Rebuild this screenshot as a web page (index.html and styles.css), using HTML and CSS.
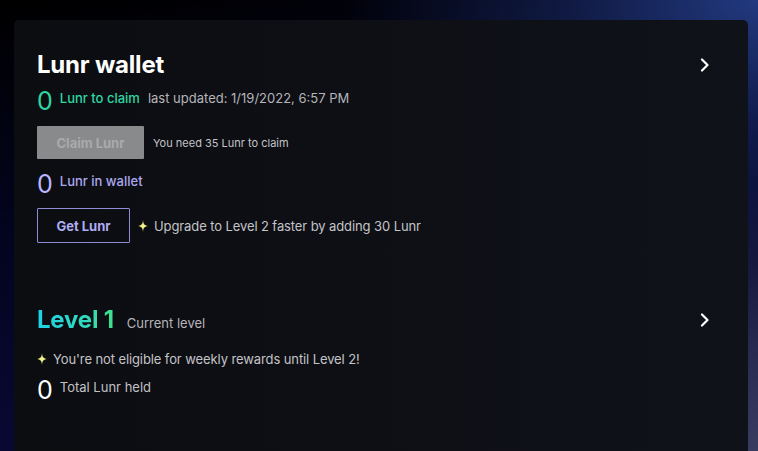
FILE: index.html
```html
<!DOCTYPE html>
<html>
<head>
<meta charset="utf-8">
<link rel="stylesheet" href="styles.css">
</head>
<body>
<div class="card">
  <section class="wallet">
    <div class="head">
      <h2 class="title">Lunr wallet</h2>
      <svg class="chev" width="10" height="14" viewBox="0 0 10 14"><path d="M2 1.5 L7.5 7 L2 12.5" fill="none" stroke="#fff" stroke-width="2.2" stroke-linecap="round" stroke-linejoin="round"/></svg>
    </div>
    <div class="stat green">
      <span class="num">0</span>
      <span class="label">Lunr to claim</span>
      <span class="meta">last updated: 1/19/2022, 6:57 PM</span>
    </div>
    <div class="action">
      <button class="btn btn-disabled">Claim Lunr</button>
      <span class="note">You need 35 Lunr to claim</span>
    </div>
    <div class="stat lav">
      <span class="num">0</span>
      <span class="label">Lunr in wallet</span>
    </div>
    <div class="action">
      <button class="btn btn-outline">Get Lunr</button>
      <svg class="spark" width="10" height="12" viewBox="0 0 10 12"><path d="M5 0 C5.4 4.2 6 5.2 10 6 C6 6.8 5.4 7.8 5 12 C4.6 7.8 4 6.8 0 6 C4 5.2 4.6 4.2 5 0 Z" fill="#f2f28a"/></svg>
      <span class="hint">Upgrade to Level 2 faster by adding 30 Lunr</span>
    </div>
  </section>
  <section class="level">
    <div class="head">
      <div class="level-title">
        <h2 class="title grad">Level 1</h2>
        <span class="meta">Current level</span>
      </div>
      <svg class="chev" width="10" height="14" viewBox="0 0 10 14"><path d="M2 1.5 L7.5 7 L2 12.5" fill="none" stroke="#fff" stroke-width="2.2" stroke-linecap="round" stroke-linejoin="round"/></svg>
    </div>
    <div class="info">
      <svg class="spark" width="10" height="12" viewBox="0 0 10 12"><path d="M5 0 C5.4 4.2 6 5.2 10 6 C6 6.8 5.4 7.8 5 12 C4.6 7.8 4 6.8 0 6 C4 5.2 4.6 4.2 5 0 Z" fill="#f2f28a"/></svg>
      <span class="hint">You're not eligible for weekly rewards until Level 2!</span>
    </div>
    <div class="stat white">
      <span class="num">0</span>
      <span class="label">Total Lunr held</span>
    </div>
  </section>
</div>
</body>
</html>
```
FILE: styles.css
```css
* { box-sizing: border-box; }
html, body { height: 100%; }
body {
  margin: 0;
  overflow: hidden;
  font-family: Inter, "Noto Sans", sans-serif;
  background:
    radial-gradient(ellipse 55% 60% at 100% 0%, #22397f 0%, rgba(30,50,120,0.5) 45%, rgba(0,0,0,0) 100%),
    radial-gradient(ellipse 30% 60% at 100% 100%, #3a3d60 0%, rgba(0,0,0,0) 100%),
    linear-gradient(170deg, #000000 0%, #03041f 40%, #0c0c40 100%);
  padding: 20px 10px 0 14px;
}
.card {
  height: 100%;
  background: linear-gradient(90deg, #0c0d11 0%, #0e1016 60%, #10121a 100%);
  border-radius: 5px 5px 0 0;
  padding: 32px 40px 0 23px;
}
.head {
  display: flex;
  justify-content: space-between;
  align-items: center;
}
.title {
  margin: 0;
  font-size: 24px;
  line-height: 26px;
  font-weight: 700;
  color: #ffffff;
  letter-spacing: -0.2px;
}
.chev { display: block; margin-right: -2px; }
.stat {
  display: flex;
  align-items: flex-start;
  margin-top: 11px;
}
.num {
  font-size: 25px;
  line-height: 24px;
  font-weight: 400;
  margin-right: 7px;
}
.label {
  font-size: 13px;
  line-height: 16px;
  margin-top: 1px;
  font-weight: 500;
}
.meta {
  font-size: 13px;
  line-height: 16px;
  color: #b5b5b9;
  margin-left: 8px;
  margin-top: 1px;
}
.green .num, .green .label { color: #2fd6a2; }
.lav .num { color: #b9b6ff; }
.lav .label { color: #aba8f0; }
.white .num { color: #ffffff; }
.white .label { color: #c2c2c6; font-weight: 400; }
.action {
  display: flex;
  align-items: center;
  margin-top: 13px;
}
.btn {
  font-family: inherit;
  font-size: 13px;
  font-weight: 700;
  border-radius: 1px;
  padding: 0;
  cursor: pointer;
}
.btn-disabled {
  width: 107px;
  height: 33px;
  background: #898a8b;
  color: #a9aaab;
  border: none;
}
.btn-outline {
  width: 93px;
  height: 35px;
  background: transparent;
  color: #afacf2;
  border: 1px solid #8f8cd6;
}
.note {
  font-size: 11px;
  color: #c4c4c8;
  margin-left: 9px;
}
.spark { display: block; margin-left: 8px; flex: none; }
.hint {
  font-size: 13px;
  line-height: 16px;
  color: #c4c4c8;
  margin-left: 6px;
  letter-spacing: -0.1px;
}
.wallet .stat.lav { margin-top: 13px; }
.wallet .action:last-child { margin-top: 12px; }
.level { margin-top: 64px; }
.level-title {
  display: flex;
  align-items: baseline;
}
.grad {
  background: linear-gradient(90deg, #1fd2ea 0%, #2fd9c0 60%, #3fe08a 100%);
  -webkit-background-clip: text;
  background-clip: text;
  color: transparent;
}
.level-title .meta { margin-left: 13px; }
.info {
  display: flex;
  align-items: center;
  margin-top: 18px;
}
.info .spark { margin-left: 0; }
.level .stat { margin-top: 11px; }
```
